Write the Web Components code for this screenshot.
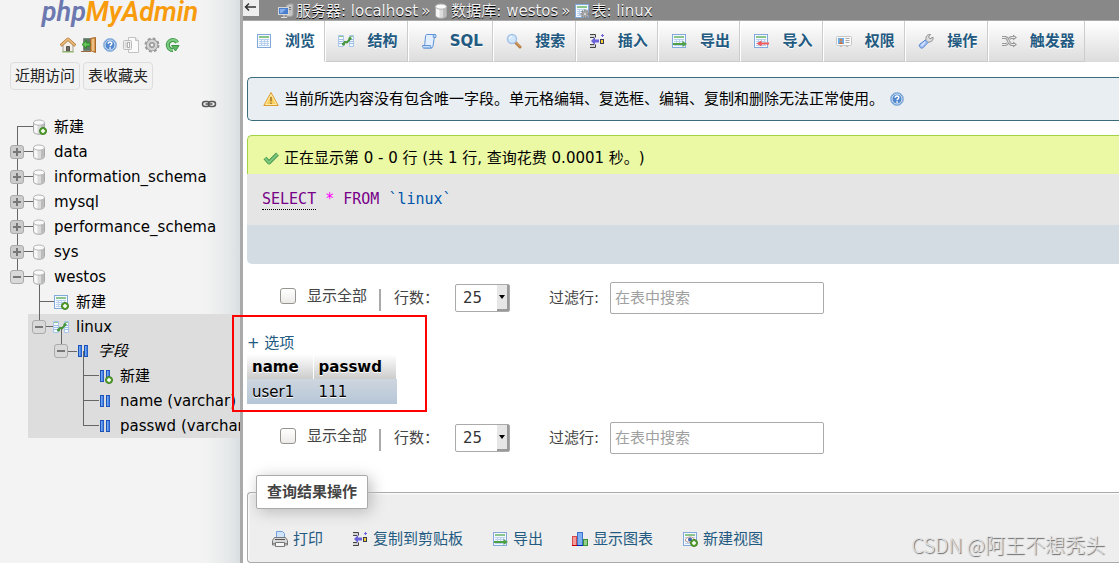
<!DOCTYPE html>
<html lang="zh-CN">
<head>
<meta charset="utf-8">
<title>localhost / westos / linux | phpMyAdmin</title>
<style>
    html, body {
        margin: 0;
        background: #fff;
    }
    body {
        --link: #235a81;
        --line: #aaa;
        font-family: "DejaVu Sans", "Noto Sans CJK SC", sans-serif;
        font-size: 15px;
        line-height: 22px;
        text-spacing-trim: space-all;
        color: #000;
    }
</style>
</head>
<body>
<pma-app>
    <pma-sidebar slot="sidebar">
        <tree-node label="新建" icon="dbnew" first></tree-node>
        <tree-node label="data" icon="db" toggle="plus"></tree-node>
        <tree-node label="information_schema" icon="db" toggle="plus"></tree-node>
        <tree-node label="mysql" icon="db" toggle="plus"></tree-node>
        <tree-node label="performance_schema" icon="db" toggle="plus"></tree-node>
        <tree-node label="sys" icon="db" toggle="plus"></tree-node>
        <tree-node label="westos" icon="db" toggle="minus" last>
            <tree-node label="新建" icon="tablenew"></tree-node>
            <tree-node label="linux" icon="structure" toggle="minus" last selected>
                <tree-node label="字段" icon="columns" toggle="minus" last group>
                    <tree-node label="新建" icon="columnnew"></tree-node>
                    <tree-node label="name (varchar)" icon="columns"></tree-node>
                    <tree-node label="passwd (varchar)" icon="columns" last></tree-node>
                </tree-node>
            </tree-node>
        </tree-node>
    </pma-sidebar>

    <pma-breadcrumbs></pma-breadcrumbs>
    <pma-tabs>
        <pma-tab icon="table" active>浏览</pma-tab>
        <pma-tab icon="structure">结构</pma-tab>
        <pma-tab icon="sql">SQL</pma-tab>
        <pma-tab icon="search">搜索</pma-tab>
        <pma-tab icon="insert">插入</pma-tab>
        <pma-tab icon="export">导出</pma-tab>
        <pma-tab icon="import">导入</pma-tab>
        <pma-tab icon="rights">权限</pma-tab>
        <pma-tab icon="wrench">操作</pma-tab>
        <pma-tab icon="triggers">触发器</pma-tab>
    </pma-tabs>
    <pma-notice>当前所选内容没有包含唯一字段。单元格编辑、复选框、编辑、复制和删除无法正常使用。</pma-notice>
    <sql-result>正在显示第 0 - 0 行 (共 1 行, 查询花费 0.0001 秒。)</sql-result>
    <row-controls></row-controls>
    <result-table></result-table>
    <row-controls></row-controls>
    <result-operations>
        <action-link icon="print">打印</action-link>
        <action-link icon="insert">复制到剪贴板</action-link>
        <action-link icon="export">导出</action-link>
        <action-link icon="chart">显示图表</action-link>
        <action-link icon="viewnew">新建视图</action-link>
    </result-operations>
</pma-app>

<script>
const SHEET = `
    <rect x="1.5" y="1.5" width="13" height="13" fill="#f4f9ff" stroke="#82a9dc"/>
    <path d="M3 4h10" stroke="#8bc58b" stroke-width="2"/>
    <path d="M3 6.5h10M3 8.5h10M3 10.5h10M3 12.5h10" stroke="#b9d0ee"/>
    <path d="M5.5 6v7M8.5 6v7M11.5 6v7" stroke="#b9d0ee"/>`;

const CYLINDER = `
    <path d="M2.5 3.5v9c0 1.6 2.5 2.8 5.5 2.8s5.5-1.2 5.5-2.8v-9z" fill="#dcdcdc" stroke="#a9a9a9"/>
    <path d="M3.2 5v7.500c.4 1 2 1.700 3.300 2V5.500z" fill="#f8f8f8"/>
    <path d="M10 6v8.500c1.600-.3 2.600-1 3-1.800V5z" fill="#bcbcbc"/>
    <ellipse cx="8" cy="3.600" rx="5.500" ry="2.600" fill="#fafafa" stroke="#b5b5b5"/>`;

const BADGE = `
    <circle cx="12" cy="12" r="3.500" fill="#5aa636" stroke="#407f22"/>
    <path d="M12 10v4M10 12h4" stroke="#fff" stroke-width="1.500"/>`;

const BARS = `
    <rect x="3.500" y="2.500" width="3" height="11" fill="#6fa6f2" stroke="#1c52b8"/>
    <rect x="9.500" y="2.500" width="3" height="11" fill="#6fa6f2" stroke="#1c52b8"/>
    <path d="M6 3v10M12 3v10" stroke="#2f6bd6"/>`;

// Semua ikon digambar pada kanvas 16x16
const ICONS = {
    home: `
        <path d="M3 8v6.500h10V8L8 3.500z" fill="#f4efe6" stroke="#a5a098"/>
        <path d="M6.500 14V9.500h3V14z" fill="#6f6a64" stroke="#55504a"/>
        <path d="M.8 8.600 8 2l7.200 6.600" fill="none" stroke="#a8682a" stroke-width="3" stroke-linejoin="round"/>
        <path d="M1.200 8.200 8 2l6.800 6.200" fill="none" stroke="#e9b876" stroke-width="2"/>
        <path d="M2 15h12" stroke="#8cbf5f"/>`,
    exit: `
        <path d="M2.500 1.500h8v12h-8z" fill="#5f7869" stroke="#7b8b7f"/>
        <path d="M9.500 1.500 14.500.5v15l-5-2z" fill="#d99b52" stroke="#a8672a"/>
        <path d="M12 2v12" stroke="#edbe83" stroke-width="2"/>
        <path d="M1 7.500 5.500 3.500v2.500H9v3H5.500v2.500z" fill="#67c25a" stroke="#2e8a2a"/>
        <path d="M0 14.500h10" stroke="#9b6b3b"/>`,
    help: `
        <circle cx="8" cy="8" r="6.500" fill="#5b94d6" stroke="#9bb9dc"/>
        <circle cx="8" cy="8" r="5" fill="#4f86cc" stroke="#dfeaf7"/>
        <path d="M6.200 6.700c0-2.400 3.700-2.200 3.600-.2 0 1.300-1.700 1.300-1.700 2.700" fill="none" stroke="#fff" stroke-width="1.500"/>
        <rect x="7.300" y="10.300" width="1.600" height="1.500" fill="#fff"/>`,
    docs: `
        <path d="M5.500.5h7l3 3v12h-10z" fill="#fafafa" stroke="#c2c2c2"/>
        <path d="M12.500.5v3h3" fill="#e4e4e4" stroke="#c2c2c2"/>
        <rect x=".5" y="3.500" width="8" height="9" rx="1" fill="#ededed" stroke="#bdbdbd"/>
        <path d="M3 5.500v5" stroke="#c4c4c4"/>
        <rect x="4.500" y="5.500" width="2" height="5" fill="#fff" stroke="#b2b2b2"/>`,
    gear: `
        <circle cx="8" cy="8" r="6" fill="none" stroke="#9a9a9a" stroke-width="3" stroke-dasharray="2.600 2.112"/>
        <circle cx="8" cy="8" r="4.200" fill="none" stroke="#989898" stroke-width="4"/>
        <circle cx="8" cy="8" r="4.200" fill="none" stroke="#d2d2d2" stroke-width="2.500"/>
        <circle cx="8" cy="8" r="2" fill="#f3f3f3" stroke="#8a8a8a"/>`,
    reload: `
        <path d="M12.200 5.600A5 5 0 1 0 8 13" fill="none" stroke="#3c9646" stroke-width="4"/>
        <path d="M12.200 5.600A5 5 0 1 0 8 13" fill="none" stroke="#7bcb80" stroke-width="2"/>
        <path d="M6.500 8.500h7.500L10.500 14z" fill="#5db765" stroke="#3c9646"/>`,
    link: `
        <rect x="1.500" y="5.500" width="7" height="5" rx="2.500" fill="#eee" stroke="#555" stroke-width="1.500"/>
        <rect x="7.500" y="5.500" width="7" height="5" rx="2.500" fill="#eee" stroke="#555" stroke-width="1.500"/>
        <path d="M4.500 8h7" stroke="#555" stroke-width="1.500"/>`,
    db: CYLINDER,
    dbnew: CYLINDER + BADGE,
    table: SHEET,
    tablenew: SHEET + BADGE,
    tablegear: SHEET + `
        <circle cx="11" cy="11" r="3.500" fill="#b4b4b4" stroke="#858585" stroke-width="2" stroke-dasharray="1.500 1"/>
        <circle cx="11" cy="11" r="1.500" fill="#eee" stroke="#999"/>`,
    structure: `
        <path d="M.5 2.500h5v11h-5zM11.500 2.500h4v11h-4z" fill="#f4f9ff" stroke="#a9c6ea"/>
        <path d="M1 3.500h4M12 3.500h3" stroke="#8bc58b"/>
        <path d="M1 6.500h4M1 8.500h4M1 10.500h4M12 6.500h3M12 8.500h3M12 10.500h3" stroke="#9fbfe6"/>
        <path d="M5 11.500 7 9l2 .500 3.500-4" fill="none" stroke="#46963c" stroke-width="2"/>
        <circle cx="5.500" cy="11" r="1.600" fill="#46963c"/>
        <circle cx="12" cy="5.500" r="1.600" fill="#46963c"/>`,
    columns: BARS,
    columnnew: BARS + BADGE,
    server: `
        <path d="M8.500 2.500 11 1h4v11l-2 1.500H8.500z" fill="#c4c4c4" stroke="#a2a2a2"/>
        <path d="M10 4.500h3M10 6.500h3" stroke="#777"/>
        <rect x=".5" y="4.500" width="10" height="7" fill="#4a7fd0" stroke="#d6d6d6"/>
        <path d="M2 6h6l-4 4H2z" fill="#86aee8"/>
        <path d="M3 14.500h6M6 12v2" stroke="#ddd"/>`,
    sql: `
        <path d="M5.500 1.500h9c-1.500 1-1 3-1.500 5l-1 6.500c-.3 1.500-1 2-2 2H2.500c1.200-.8 1-2.500 1.300-4.500l.7-6.500c0-1.500.3-2 1-2.500z" fill="#e3efff" stroke="#5f93d6"/>
        <path d="M13 1.500c-1 .8-1 2-.5 3h2.300c.3-1.500.3-2.500-.5-3z" fill="#b7d2f6" stroke="#5f93d6"/>
        <path d="M1.500 12.500h8c0 1 .3 2 1 2.500H3c-1 0-1.700-1-1.500-2.500z" fill="#c8ddf9" stroke="#5f93d6"/>`,
    search: `
        <path d="m9.500 9.500 4.500 4.500" stroke="#b57d42" stroke-width="3" stroke-linecap="round"/>
        <path d="m10 9.500 4 4" stroke="#e3b176"/>
        <circle cx="6" cy="6" r="4.500" fill="#cfe6fb" stroke="#a6c2e6" stroke-width="1.500"/>
        <path d="M3.500 6A2.500 2.500 0 0 1 6 3.500" fill="none" stroke="#fff"/>`,
    insert: `
        <path d="M1 1.500h5.500v3M1 14.500h5.500v-3M1 4.500h4M1 11.500h4" fill="none" stroke="#444"/>
        <path d="M1 3h5M1 13h5" stroke="#bbb"/>
        <path d="m2 8 4-4v2.500h4v3H6V12z" fill="#6a62d8"/>
        <rect x="11.500" y="6.500" width="3" height="4" fill="#f8d030" stroke="#3b3b52"/>
        <path d="M13.500 1v3M12 2.500h3" stroke="#6a62d8"/>`,
    export: SHEET + `
        <path d="M2 11h10" stroke="#4f9f45" stroke-width="2"/>
        <path d="m11.500 8 4.500 3-4.500 3z" fill="#4f9f45"/>`,
    import: SHEET + `
        <path d="M8 10.500h8" stroke="#f05a5a" stroke-width="2"/>
        <path d="m8.500 7.500-5 3 5 3z" fill="#f05a5a"/>`,
    rights: `
        <rect x=".5" y="3.500" width="15" height="9" rx="1" fill="#fafafa" stroke="#c6c6c6"/>
        <rect x="2" y="5" width="6" height="6" fill="#66aef0"/>
        <circle cx="5" cy="7" r="1.500" fill="#c98852"/>
        <path d="M3 11c0-2.500 4-2.500 4 0z" fill="#d96b2c"/>
        <path d="M9.500 5.500h4M9.500 7.500h4M9.500 9.500h4" stroke="#aaa"/>
        <path d="M4 13.500h2M10 13.500h2" stroke="#bcbcbc"/>`,
    wrench: `
        <path d="M8 6.500c-.5-3 1.500-5.500 4.500-5l-2 2.500 1.500 1.800 3-1.600c.5 3-1.500 5-4.500 4.800L9.500 10 7 7.500z" fill="#ddd" stroke="#8b8b8b"/>
        <path d="m7.500 7 2.500 2.500-4.500 4.800c-1.200 1.200-2.500 1-3.500 0s-1-2.200 0-3.300z" fill="#9fbff5" stroke="#5b84cf"/>
        <path d="m7 9-3.500 3.800" stroke="#d9e7ff" stroke-width="1.500"/>`,
    triggers: `
        <path d="M1 4.500h3.500c3 0 3 7 6 7H13M1 11.500h3.500c1 0 1.600-.6 2-1.500M8.500 6c.5-1 1.200-1.500 2-1.500H13" fill="none" stroke="#999" stroke-width="3"/>
        <path d="m12 1.500 4 3-4 3zM12 8.500l4 3-4 3z" fill="#999"/>
        <path d="M1 4.500h3.500c3 0 3 7 6 7H14M1 11.500h3.500c1 0 1.600-.6 2-1.500M8.500 6c.5-1 1.200-1.500 2-1.500H14" fill="none" stroke="#eee"/>`,
    warning: `
        <path d="M8 1.500 15.200 14.500H.8z" fill="#f9cf5c" stroke="#dc9a34" stroke-linejoin="round"/>
        <path d="M8 3.500 13.500 13.500h-11z" fill="none" stroke="#fdeaa9"/>
        <path d="M8 6v4.500M8 11.500V13" stroke="#a5752a" stroke-width="1.500"/>`,
    ok: `
        <path d="m2 8 4 4.500L14.500 4" fill="none" stroke="#4a9a4e" stroke-width="4" stroke-linejoin="round"/>
        <path d="m2 8 4 4.500L14.500 4" fill="none" stroke="#7cc87f" stroke-width="2"/>`,
    print: `
        <path d="M4.500 7V.5h6l2 2V7z" fill="#cfe3fb" stroke="#6f9fdc"/>
        <path d="M2.500 6.500h11l2 3v4.500h-15V9.500z" fill="#d9d9d9" stroke="#777"/>
        <path d="M3 8.500h10" stroke="#555"/>
        <path d="M1 12.500h14" stroke="#888"/>
        <path d="M3.500 11.500h9v4h-9z" fill="#f5f5f5" stroke="#777"/>`,
    chart: `
        <rect x=".5" y="5.500" width="4" height="9" fill="#f49b9b" stroke="#d84a4a"/>
        <rect x="5.500" y="1.500" width="5" height="13" fill="#7eb0f2" stroke="#3a72cc"/>
        <rect x="11.500" y="8.500" width="4" height="6" fill="#96cf8c" stroke="#3b9136"/>
        <path d="M0 14.500h5" stroke="#c00000"/>
        <path d="M5 14.500h6" stroke="#0026b8"/>`,
    viewnew: SHEET + `
        <path d="M3 9c2-4 8-4 10 0-2 3-8 3-10 0z" fill="#fff" stroke="#c9987c"/>
        <circle cx="8" cy="8.500" r="2" fill="#3766b4"/>` + BADGE
};

// 1. <pma-icon> - ikon kecil
class PmaIcon extends HTMLElement {
    constructor() {
        super();
        this.attachShadow({ mode: 'open' });
    }

    connectedCallback() {
        this.shadowRoot.innerHTML = `
            <style>
                :host { display: block; flex: none; width: 16px; height: 16px; }
                svg { display: block; width: 100%; height: 100%; }
            </style>
            <svg viewBox="0 0 16 16" aria-hidden="true">${ICONS[this.getAttribute('name')] || ''}</svg>
        `;
    }
}
customElements.define('pma-icon', PmaIcon);

// 2. <pma-app> - kerangka halaman
class PmaApp extends HTMLElement {
    constructor() {
        super();
        this.attachShadow({ mode: 'open' }).innerHTML = `
            <style>
                :host {
                    display: grid;
                    grid-template-columns: 243px minmax(0, 1fr);
                    min-height: 100vh;
                }
                main { position: relative; }
                .watermark {
                    position: absolute;
                    right: 14px;
                    bottom: 4px;
                    font-family: "Noto Sans CJK SC", sans-serif;
                    font-size: 20px;
                    line-height: 28px;
                    font-weight: 300;
                    color: #e2e2e2;
                    text-shadow: 1px 1px 1px #666;
                    white-space: nowrap;
                    pointer-events: none;
                }
            </style>
            <slot name="sidebar"></slot>
            <main>
                <slot></slot>
                <span class="watermark">CSDN @阿王不想秃头</span>
            </main>
        `;
    }
}
customElements.define('pma-app', PmaApp);

// 3. <pma-sidebar> - panel navigasi
class PmaSidebar extends HTMLElement {
    constructor() {
        super();
        this.attachShadow({ mode: 'open' });
    }

    connectedCallback() {
        const tools = [
            ['home', '主页'], ['exit', '退出'], ['help', '帮助'],
            ['docs', '文档'], ['gear', '设置'], ['reload', '刷新']
        ];
        this.shadowRoot.innerHTML = `
            <style>
                :host {
                    display: block;
                    box-sizing: border-box;
                    min-width: 0;
                    border-right: 3px solid var(--line);
                    background: linear-gradient(to left, #d9dee1, #e6e9ea 12px, #f3f3f3 36px);
                }
                .logo {
                    display: block;
                    height: 28px;
                    line-height: 24px;
                    text-align: center;
                    text-decoration: none;
                    font-family: Roboto, sans-serif;
                    font-size: 27px;
                    font-weight: 600;
                    font-style: italic;
                    color: #f89c0e;
                }
                .logo span { color: #6c78af; }
                .tools {
                    display: flex;
                    justify-content: center;
                    gap: 5px;
                    margin-top: 9px;
                }
                .recent {
                    display: flex;
                    gap: 3px;
                    padding: 9px 10px 0;
                }
                button {
                    font: inherit;
                    color: #222;
                    height: 28px;
                    padding: 0 4px;
                    border: 1px solid #ddd;
                    border-radius: 4px;
                    background: #f2f2f2;
                }
                .sync {
                    display: flex;
                    justify-content: flex-end;
                    height: 18px;
                    margin-top: 6px;
                    padding-right: 23px;
                }
                .sync a { height: 16px; }
                nav { padding-left: 6px; overflow: hidden; }
            </style>
            <a class="logo" href="#"><span>php</span>MyAdmin</a>
            <div class="tools">
                ${tools.map(([icon, title]) => `<a href="#" aria-label="${title}"><pma-icon name="${icon}"></pma-icon></a>`).join('')}
            </div>
            <div class="recent">
                <button type="button">近期访问</button>
                <button type="button">表收藏夹</button>
            </div>
            <div class="sync"><a href="#" aria-label="链接"><pma-icon name="link"></pma-icon></a></div>
            <nav><slot></slot></nav>
        `;
    }
}
customElements.define('pma-sidebar', PmaSidebar);

// 4. <tree-node> - satu baris pohon, anaknya masuk lewat slot
class TreeNode extends HTMLElement {
    constructor() {
        super();
        this.attachShadow({ mode: 'open' });
    }

    connectedCallback() {
        const toggle = this.getAttribute('toggle');
        this.shadowRoot.innerHTML = `
            <style>
                :host { display: block; }
                :host([selected]) { background: #ddd; }
                .row {
                    display: grid;
                    grid-template-columns: 22px 22px 1fr;
                    height: 25px;
                    align-items: center;
                }
                :host([group]) .row { height: 24px; font-style: italic; }
                .branch, .icon {
                    display: grid;
                    height: 100%;
                    place-items: center;
                }
                /* garis vertikal dan horizontal cabang */
                .branch {
                    --up: #666;
                    --down: #666;
                    background:
                        linear-gradient(#666, #666) right center / 11px 1px no-repeat,
                        linear-gradient(var(--up), var(--up)) center top / 1px 50% no-repeat,
                        linear-gradient(var(--down), var(--down)) center bottom / 1px 50% no-repeat;
                }
                :host([first]) .branch { --up: transparent; }
                :host([last]) .branch { --down: transparent; }
                .icon {
                    background: linear-gradient(#666, #666) left center / 5px 1px no-repeat;
                }
                :host([toggle="minus"]) .icon {
                    background:
                        linear-gradient(#666, #666) left center / 5px 1px no-repeat,
                        linear-gradient(#666, #666) center bottom / 1px 50% no-repeat;
                }
                button {
                    display: grid;
                    place-items: center;
                    width: 14px;
                    height: 14px;
                    padding: 0;
                    border: 1px solid #aaa;
                    border-radius: 3px;
                    background: #ccc;
                }
                :host([toggle="minus"]) button { background: #d9d9d9; }
                svg { display: block; width: 10px; height: 10px; }
                a {
                    padding-left: 4px;
                    color: #000;
                    text-decoration: none;
                    white-space: nowrap;
                }
                .children { padding-left: 22px; }
            </style>
            <div class="row">
                <div class="branch">
                    ${toggle ? `
                    <button type="button" aria-label="${toggle === 'plus' ? '展开' : '收起'}">
                        <svg viewBox="0 0 10 10"><path d="${toggle === 'plus' ? 'M5 1v8M1 5h8' : 'M1 5h8'}" stroke="#777" stroke-width="2"/></svg>
                    </button>` : ''}
                </div>
                <div class="icon"><pma-icon name="${this.getAttribute('icon')}"></pma-icon></div>
                <a href="#">${this.getAttribute('label')}</a>
            </div>
            <div class="children"><slot></slot></div>
        `;
    }
}
customElements.define('tree-node', TreeNode);

// 5. <pma-breadcrumbs> - lokasi server, database dan tabel
class PmaBreadcrumbs extends HTMLElement {
    constructor() {
        super();
        this.attachShadow({ mode: 'open' }).innerHTML = `
            <style>
                :host {
                    display: flex;
                    height: 20px;
                    background: #888;
                    border-bottom: 1px solid var(--line);
                }
                button {
                    width: 16px;
                    height: 16px;
                    padding: 0;
                    border: 0;
                    background: #eee;
                    color: #333;
                }
                button svg { display: block; width: 16px; height: 16px; }
                nav {
                    display: flex;
                    align-items: center;
                    gap: 3px;
                    padding-left: 19px;
                    padding-top: 2px;
                    color: #f2f2f2;
                    text-shadow: 0 1px 0 #000;
                    white-space: nowrap;
                }
                a {
                    display: flex;
                    align-items: center;
                    gap: 2px;
                    color: inherit;
                    text-decoration: none;
                }
            </style>
            <button type="button" aria-label="隐藏面板">
                <svg viewBox="0 0 16 16"><path d="M2 7h11M6 3.500 2.500 7 6 10.500" fill="none" stroke="#333" stroke-width="1.500"/></svg>
            </button>
            <nav>
                <a href="#"><pma-icon name="server"></pma-icon>服务器: localhost</a>
                <span>»</span>
                <a href="#"><pma-icon name="db"></pma-icon>数据库: westos</a>
                <span>»</span>
                <a href="#"><pma-icon name="tablegear"></pma-icon>表: linux</a>
            </nav>
        `;
    }
}
customElements.define('pma-breadcrumbs', PmaBreadcrumbs);

// 6. <pma-tabs> dan <pma-tab> - menu atas
class PmaTabs extends HTMLElement {
    constructor() {
        super();
        this.attachShadow({ mode: 'open' }).innerHTML = `
            <style>
                :host {
                    display: block;
                    background: linear-gradient(#fff, #dcdcdc);
                }
                nav {
                    display: flex;
                    height: 41px;
                    padding-right: 34px;
                }
            </style>
            <nav><slot></slot></nav>
        `;
    }
}
customElements.define('pma-tabs', PmaTabs);

class PmaTab extends HTMLElement {
    constructor() {
        super();
        this.attachShadow({ mode: 'open' });
    }

    connectedCallback() {
        this.shadowRoot.innerHTML = `
            <style>
                :host {
                    display: block;
                    flex: 1 0 auto;
                    box-sizing: border-box;
                    border-left: 1px solid #fff;
                    border-right: 1px solid #ccc;
                    border-bottom: 1px solid #ccc;
                }
                :host([active]) { background: #fff; border-bottom-color: #fff; }
                a {
                    display: flex;
                    align-items: center;
                    gap: 13px;
                    height: 40px;
                    padding: 0 9px 0 12px;
                    color: var(--link);
                    font-weight: bold;
                    text-decoration: none;
                    text-shadow: 0 1px 0 #fff;
                    white-space: nowrap;
                }
            </style>
            <a href="#"><pma-icon name="${this.getAttribute('icon')}"></pma-icon><slot></slot></a>
        `;
    }
}
customElements.define('pma-tab', PmaTab);

// 7. <pma-notice> - pesan peringatan
class PmaNotice extends HTMLElement {
    constructor() {
        super();
        this.attachShadow({ mode: 'open' }).innerHTML = `
            <style>
                :host {
                    display: flex;
                    align-items: center;
                    gap: 5px;
                    margin: 15px 0 0 4px;
                    padding: 10px 0 10px 15px;
                    border: 1px solid #3a6c7e;
                    border-right: 0;
                    border-radius: 5px 0 0 5px;
                    background: #e8eef1;
                }
            </style>
            <pma-icon name="warning"></pma-icon>
            <slot></slot>
            <a href="#" aria-label="文档"><pma-icon name="help"></pma-icon></a>
        `;
    }
}
customElements.define('pma-notice', PmaNotice);

// 8. <sql-result> - hasil query beserta SQL-nya
class SqlResult extends HTMLElement {
    constructor() {
        super();
        this.attachShadow({ mode: 'open' }).innerHTML = `
            <style>
                :host { display: block; margin: 14px 0 0 4px; }
                .success {
                    display: flex;
                    align-items: center;
                    gap: 5px;
                    padding: 11px 0 5px 15px;
                    border: 1px solid #a2d246;
                    border-width: 1px 0 0 1px;
                    border-radius: 5px 0 0 0;
                    background: #ebf8a4;
                }
                .sql {
                    padding: 14px 15px 15px;
                    background: #e5e5e5;
                }
                code {
                    display: block;
                    font-family: "DejaVu Sans Mono", monospace;
                    font-size: 15px;
                }
                .keyword { color: #770088; }
                a.keyword {
                    display: inline-block;
                    line-height: 19px;
                    text-decoration: none;
                    border-bottom: 1px dotted #000;
                }
                .star { color: #f0f; }
                .name { color: #05a; }
                .tools {
                    height: 39px;
                    border-radius: 0 0 0 5px;
                    background: #d3dce3;
                }
            </style>
            <div class="success"><pma-icon name="ok"></pma-icon><span><slot></slot></span></div>
            <div class="sql"><code><a class="keyword" href="#">SELECT</a> <span class="star">*</span> <span class="keyword">FROM</span> <span class="name">\`linux\`</span></code></div>
            <div class="tools"></div>
        `;
    }
}
customElements.define('sql-result', SqlResult);

// 9. <row-controls> - jumlah baris dan filter
class RowControls extends HTMLElement {
    constructor() {
        super();
        this.attachShadow({ mode: 'open' }).innerHTML = `
            <style>
                :host {
                    display: flex;
                    align-items: center;
                    height: 34px;
                    margin: 17px 0 0 4px;
                    padding-left: 33px;
                    color: #444;
                    white-space: nowrap;
                }
                .all {
                    display: flex;
                    align-items: center;
                    gap: 11px;
                    padding-bottom: 4px;
                }
                input[type="checkbox"] {
                    appearance: none;
                    width: 16px;
                    height: 16px;
                    margin: 0;
                    border: 1px solid #95958f;
                    border-radius: 3px;
                    background: linear-gradient(#fff, #ecebe8);
                }
                .rows {
                    display: flex;
                    align-items: center;
                    margin-left: 12px;
                }
                .rows::before {
                    content: "";
                    width: 2px;
                    height: 22px;
                    margin-top: 4px;
                    margin-right: 13px;
                    background: var(--line);
                }
                .select {
                    display: grid;
                    width: 55px;
                    margin-left: 16px;
                }
                select, .arrow { grid-area: 1 / 1; }
                select {
                    appearance: none;
                    height: 28px;
                    margin: 0;
                    padding: 0 7px;
                    border: 1px solid var(--line);
                    border-radius: 2px;
                    background: #fff;
                    font: inherit;
                    color: #333;
                }
                .arrow {
                    box-sizing: border-box;
                    display: grid;
                    place-items: center;
                    justify-self: end;
                    width: 12px;
                    height: 26px;
                    margin: 1px;
                    border-right: 2px solid #999;
                    border-bottom: 2px solid #999;
                    background: #e6e6e6;
                    pointer-events: none;
                }
                .arrow svg { width: 6px; height: 4px; }
                .filter {
                    display: flex;
                    align-items: center;
                    gap: 11px;
                    margin-left: 39px;
                }
                input[type="text"] {
                    box-sizing: border-box;
                    width: 214px;
                    height: 32px;
                    padding: 0 4px;
                    border: 1px solid var(--line);
                    border-radius: 2px;
                    background: #fff;
                    font: inherit;
                }
                input::placeholder { color: #a0a0a0; }
            </style>
            <div class="all">
                <input type="checkbox" id="all">
                <label for="all">显示全部</label>
            </div>
            <div class="rows">
                <label for="rows">行数：</label>
                <span class="select">
                    <select id="rows"><option>25</option><option>50</option><option>100</option></select>
                    <span class="arrow"><svg viewBox="0 0 6 4"><path d="M0 0h6L3 4z"/></svg></span>
                </span>
            </div>
            <div class="filter">
                <label for="filter">过滤行:</label>
                <input type="text" id="filter" placeholder="在表中搜索">
            </div>
        `;
    }
}
customElements.define('row-controls', RowControls);

// 10. <result-table> - data hasil query
class ResultTable extends HTMLElement {
    constructor() {
        super();
        this.attachShadow({ mode: 'open' }).innerHTML = `
            <style>
                :host {
                    display: block;
                    position: relative;
                    margin: 17px 0 0 4px;
                }
                a {
                    display: block;
                    width: max-content;
                    color: var(--link);
                    text-decoration: none;
                }
                table {
                    border-collapse: separate;
                    border-spacing: 0;
                    text-shadow: 0 1px 0 #fff;
                }
                th, td {
                    height: 25px;
                    padding: 0 14px 0 5px;
                    text-align: left;
                }
                th {
                    background: linear-gradient(#fff, #ccc);
                    border-right: 1px solid #fff;
                }
                tbody tr { background: linear-gradient(#ced6df, #b6c6d7); }
                .mark {
                    position: absolute;
                    top: -17px;
                    left: -15px;
                    width: 191px;
                    height: 93px;
                    border: 2px solid #f00;
                    pointer-events: none;
                }
            </style>
            <a href="#">+ 选项</a>
            <table>
                <thead><tr><th>name</th><th>passwd</th></tr></thead>
                <tbody><tr><td>user1</td><td>111</td></tr></tbody>
            </table>
            <div class="mark"></div>
        `;
    }
}
customElements.define('result-table', ResultTable);

// 11. <result-operations> - operasi atas hasil query
class ResultOperations extends HTMLElement {
    constructor() {
        super();
        this.attachShadow({ mode: 'open' }).innerHTML = `
            <style>
                :host { display: block; margin: 20px 0 0 4px; }
                fieldset {
                    margin: 0;
                    padding: 19px 0 12px 24px;
                    border: 1px solid var(--line);
                    border-right: 0;
                    border-radius: 4px 0 0 4px;
                    background: #eee;
                    box-shadow: inset 1px 1px 2px #fff;
                }
                legend {
                    margin-left: -16px;
                    padding: 5px 10px;
                    border: 1px solid var(--line);
                    border-radius: 2px;
                    background: #fff;
                    box-shadow: 3px 3px 15px #bbb;
                    color: #444;
                    font-weight: bold;
                }
                div {
                    display: flex;
                    flex-wrap: wrap;
                    gap: 29px;
                }
            </style>
            <fieldset>
                <legend>查询结果操作</legend>
                <div><slot></slot></div>
            </fieldset>
        `;
    }
}
customElements.define('result-operations', ResultOperations);

// 12. <action-link> - tautan dengan ikon
class ActionLink extends HTMLElement {
    constructor() {
        super();
        this.attachShadow({ mode: 'open' });
    }

    connectedCallback() {
        this.shadowRoot.innerHTML = `
            <style>
                :host { display: block; }
                a {
                    display: flex;
                    align-items: center;
                    gap: 5px;
                    color: var(--link);
                    text-decoration: none;
                }
            </style>
            <a href="#"><pma-icon name="${this.getAttribute('icon')}"></pma-icon><slot></slot></a>
        `;
    }
}
customElements.define('action-link', ActionLink);
</script>
</body>
</html>
